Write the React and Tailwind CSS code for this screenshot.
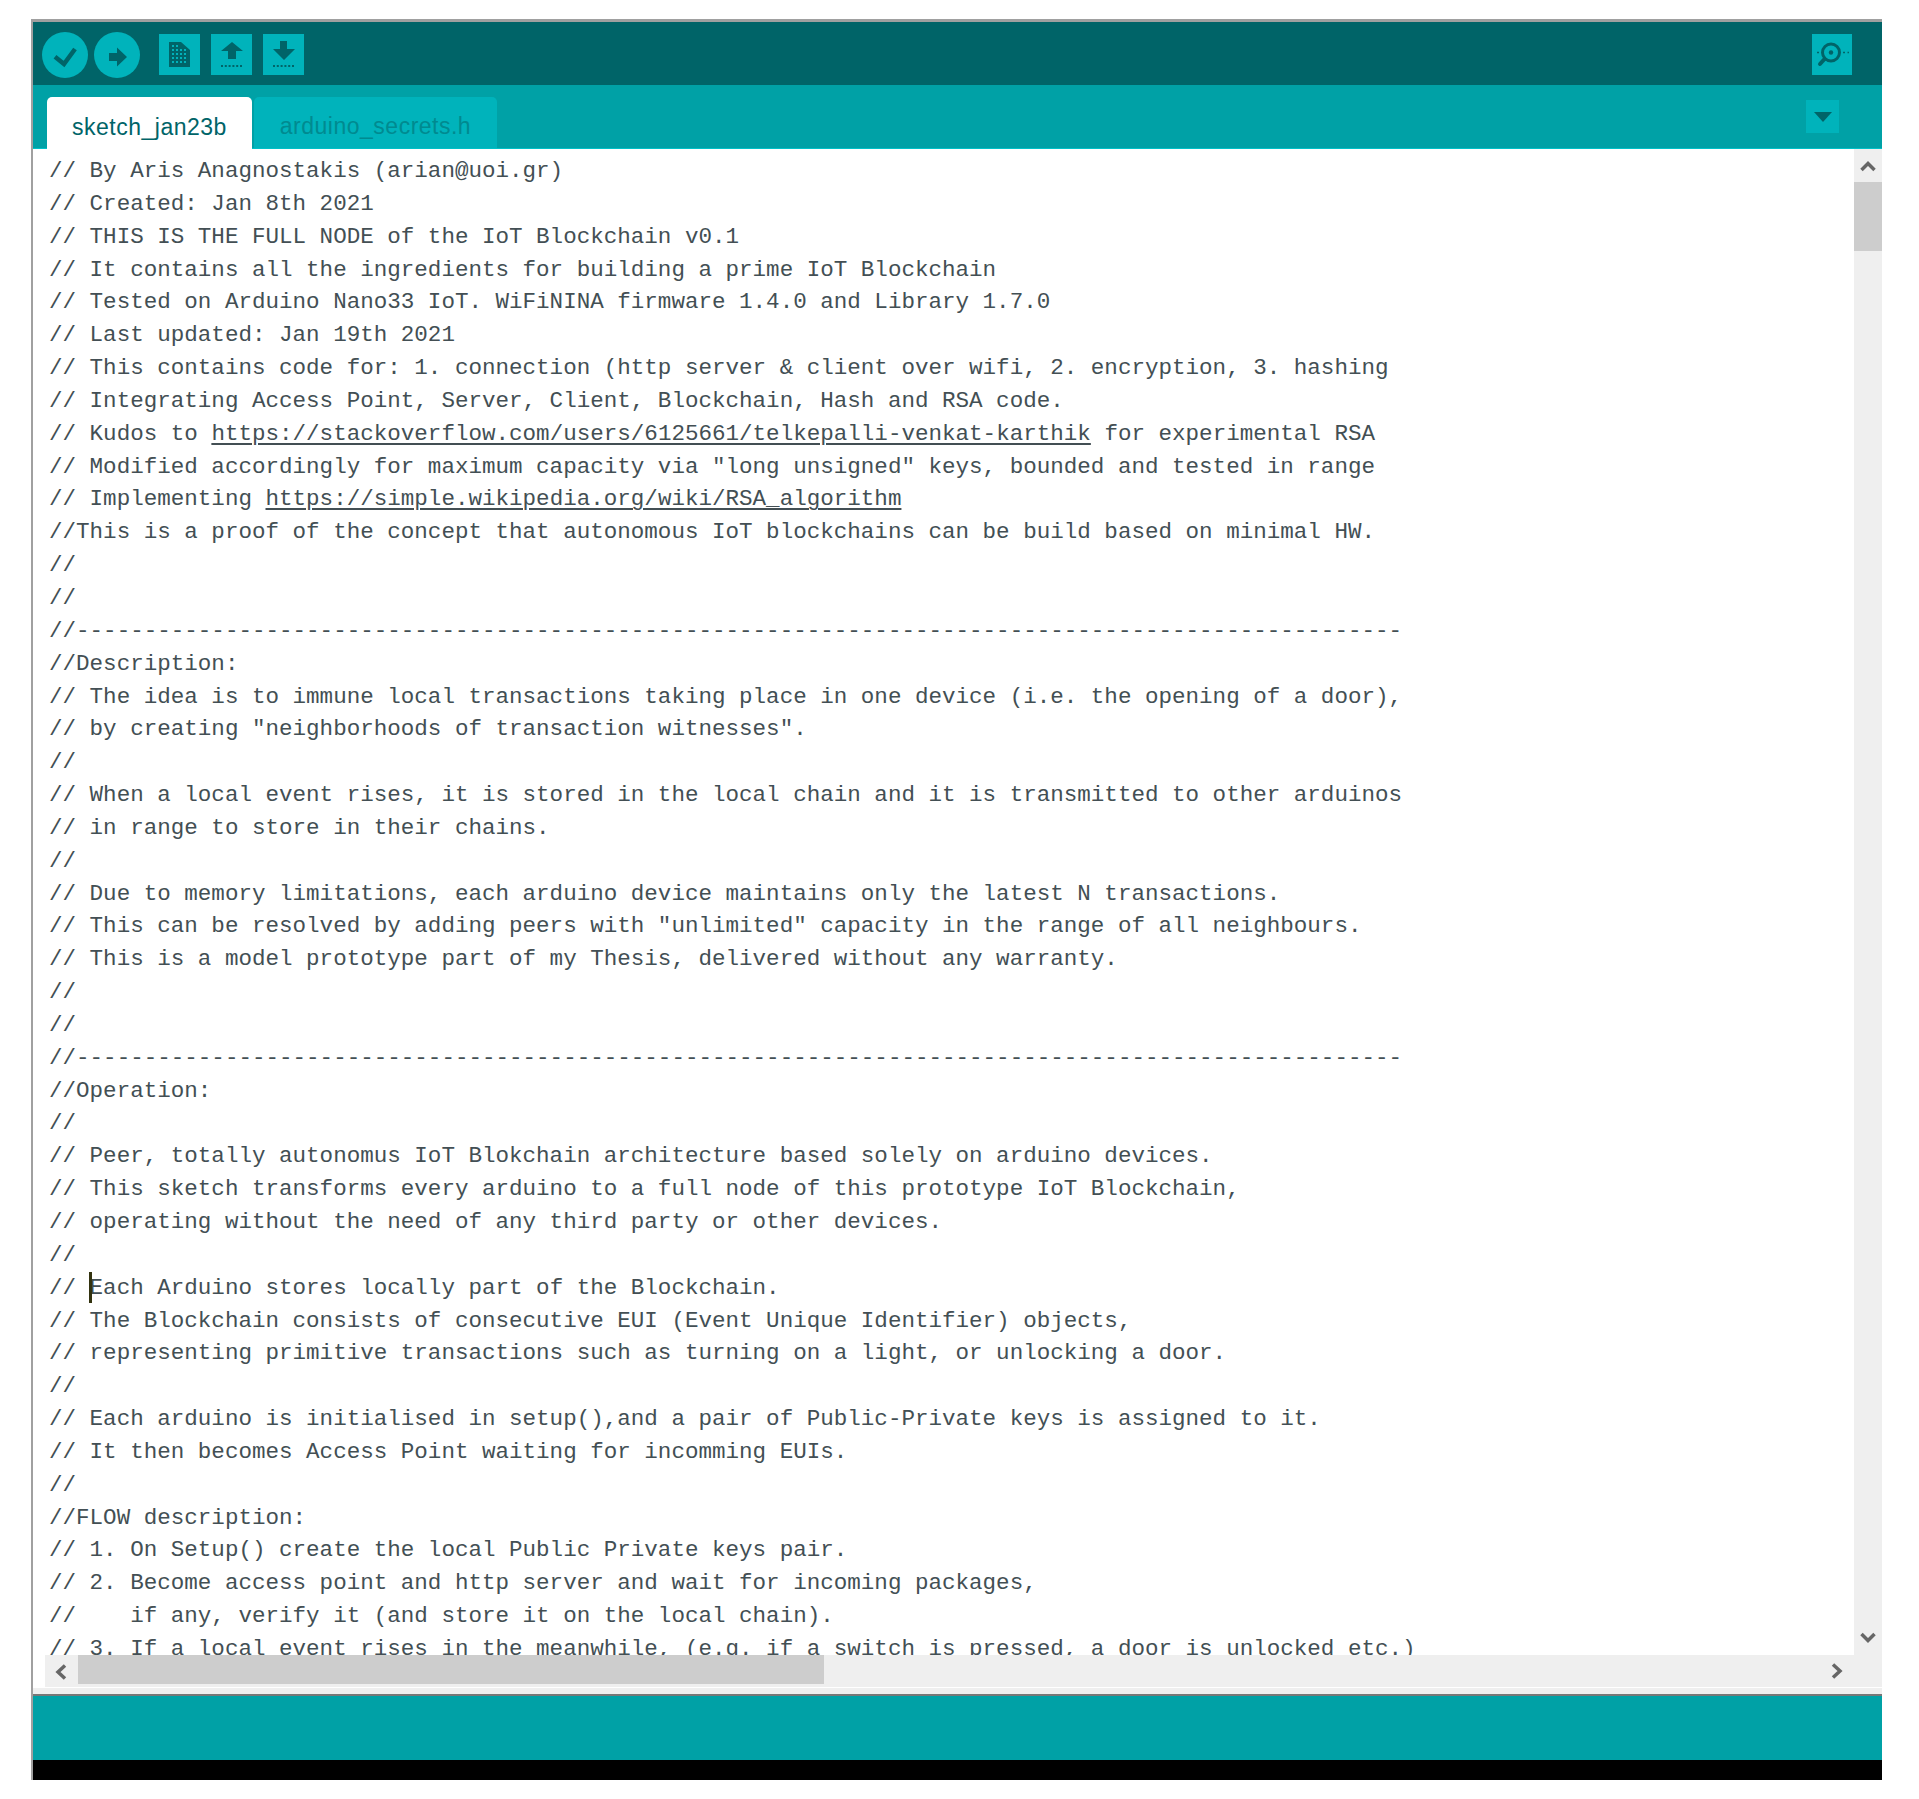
const lines = [
  "// By Aris Anagnostakis (arian@uoi.gr)",
  "// Created: Jan 8th 2021",
  "// THIS IS THE FULL NODE of the IoT Blockchain v0.1",
  "// It contains all the ingredients for building a prime IoT Blockchain",
  "// Tested on Arduino Nano33 IoT. WiFiNINA firmware 1.4.0 and Library 1.7.0",
  "// Last updated: Jan 19th 2021",
  "// This contains code for: 1. connection (http server & client over wifi, 2. encryption, 3. hashing",
  "// Integrating Access Point, Server, Client, Blockchain, Hash and RSA code.",
  ["// Kudos to ", "https://stackoverflow.com/users/6125661/telkepalli-venkat-karthik", " for experimental RSA"],
  "// Modified accordingly for maximum capacity via \"long unsigned\" keys, bounded and tested in range",
  ["// Implementing ", "https://simple.wikipedia.org/wiki/RSA_algorithm", ""],
  "//This is a proof of the concept that autonomous IoT blockchains can be build based on minimal HW.",
  "//",
  "//",
  "//" + "-".repeat(98),
  "//Description:",
  "// The idea is to immune local transactions taking place in one device (i.e. the opening of a door),",
  "// by creating \"neighborhoods of transaction witnesses\".",
  "//",
  "// When a local event rises, it is stored in the local chain and it is transmitted to other arduinos",
  "// in range to store in their chains.",
  "//",
  "// Due to memory limitations, each arduino device maintains only the latest N transactions.",
  "// This can be resolved by adding peers with \"unlimited\" capacity in the range of all neighbours.",
  "// This is a model prototype part of my Thesis, delivered without any warranty.",
  "//",
  "//",
  "//" + "-".repeat(98),
  "//Operation:",
  "//",
  "// Peer, totally autonomus IoT Blokchain architecture based solely on arduino devices.",
  "// This sketch transforms every arduino to a full node of this prototype IoT Blockchain,",
  "// operating without the need of any third party or other devices.",
  "//",
  "CARET",
  "// The Blockchain consists of consecutive EUI (Event Unique Identifier) objects,",
  "// representing primitive transactions such as turning on a light, or unlocking a door.",
  "//",
  "// Each arduino is initialised in setup(),and a pair of Public-Private keys is assigned to it.",
  "// It then becomes Access Point waiting for incomming EUIs.",
  "//",
  "//FLOW description:",
  "// 1. On Setup() create the local Public Private keys pair.",
  "// 2. Become access point and http server and wait for incoming packages,",
  "//    if any, verify it (and store it on the local chain).",
  "// 3. If a local event rises in the meanwhile, (e.g. if a switch is pressed, a door is unlocked etc.)",
];

function Line({ l }) {
  if (l === "CARET") {
    return (
      <div className="h-[32.85px] whitespace-pre">
        {"// "}
        <span className="relative">
          <span className="absolute left-[-1px] top-[-3px] h-[31px] w-[3px] bg-[#33330f]" />
          Each Arduino stores locally part of the Blockchain.
        </span>
      </div>
    );
  }
  if (Array.isArray(l)) {
    return (
      <div className="h-[32.85px] whitespace-pre">
        {l[0]}
        <span className="underline underline-offset-[3px] decoration-[2px]">{l[1]}</span>
        {l[2]}
      </div>
    );
  }
  return <div className="h-[32.85px] whitespace-pre">{l}</div>;
}

function RoundBtn({ children }) {
  return (
    <div className="w-[46px] h-[46px] rounded-full bg-[#00b3bb] flex items-center justify-center">
      <svg width="46" height="46" viewBox="0 0 46 46">{children}</svg>
    </div>
  );
}

function SquareBtn({ children }) {
  return (
    <div className="w-[41px] h-[41px] bg-[#00b3bb]">
      <svg width="41" height="41" viewBox="0 0 41 41">{children}</svg>
    </div>
  );
}

const DotRow = () => (
  <path d="M10 32h22" stroke="#006468" strokeWidth="2" strokeDasharray="2 1.8" fill="none" />
);

export default function App() {
  return (
    <div className="w-[1919px] h-[1799px] bg-white pl-[31px] pt-[19px] font-['Liberation_Mono',monospace]">
      <div className="w-[1851px] h-[1761px] border-t-[3px] border-l-[2px] border-[#a0a0a0] flex flex-col overflow-hidden">
        <div className="h-[63px] shrink-0 bg-[#006468] flex items-center pt-[2px] pl-[9px] pr-[30px]">
          <div className="flex gap-[6px]">
            <RoundBtn>
              <path d="M13 24.7l9 7.3 11-15" fill="none" stroke="#006468" strokeWidth="4.5" />
            </RoundBtn>
            <RoundBtn>
              <path d="M15 21h8v-5.5L33 25 23 34.5V29h-8z" fill="#006468" />
            </RoundBtn>
          </div>
          <div className="flex gap-[11px] ml-[19px]">
            <SquareBtn>
              <path d="M10 8h12l9 8v17H10z" fill="#006468" />
              <path d="M13 12h8M13 16h15M13 20h15M13 24h15M13 28h15" stroke="#00b3bb" strokeWidth="2" strokeDasharray="2 2" fill="none" />
            </SquareBtn>
            <SquareBtn>
              <path d="M21 8l11 9h-7v8h-8v-8h-7z" fill="#006468" />
              <DotRow />
            </SquareBtn>
            <SquareBtn>
              <path d="M17 7h7v8h8L21 26 10 15h7z" fill="#006468" />
              <DotRow />
            </SquareBtn>
          </div>
          <div className="ml-auto w-[40px] h-[41px] bg-[#00b3bb]">
            <svg width="40" height="41" viewBox="0 0 40 41">
              <circle cx="19" cy="18.5" r="8.5" fill="none" stroke="#006468" strokeWidth="3" />
              <circle cx="19" cy="18.5" r="2.2" fill="#006468" />
              <path d="M12.5 25l-4.5 5" stroke="#006468" strokeWidth="4" strokeLinecap="round" />
              <path d="M5 18.5h2M31 18.5h6" stroke="#006468" strokeWidth="1.5" strokeDasharray="2 2.5" />
            </svg>
          </div>
        </div>

        <div className="h-[64px] shrink-0 bg-[#00a1a6] border-b border-[#00c0c8] flex items-end pl-[14px] relative">
          <div className="w-[205px] h-[52px] -mb-px bg-white rounded-t-[5px] flex items-center justify-center pt-[8px] text-[#006468] text-[23px] tracking-[0.5px] font-['Liberation_Sans',sans-serif]">
            sketch_jan23b
          </div>
          <div className="w-[243px] h-[51px] ml-[2px] bg-[#00b3bb] rounded-t-[5px] flex items-center justify-center pt-[7px] text-[#008a90] text-[23px] tracking-[0.5px] font-['Liberation_Sans',sans-serif]">
            arduino_secrets.h
          </div>
          <div className="absolute right-[43px] top-[15px] w-[33px] h-[33px] bg-[#00b3bb] flex items-center justify-center">
            <svg width="18" height="10" viewBox="0 0 18 10"><path d="M0 0h18L9 10z" fill="#006468" /></svg>
          </div>
        </div>

        <div className="flex h-[1538px] shrink-0 bg-[#efefef]">
          <div className="flex flex-col flex-1 min-w-0">
            <div className="h-[1506px] shrink-0 overflow-hidden bg-white pl-[16px] pt-[6px] text-[22.55px] leading-[32.85px] text-[#434f54]">
              {lines.map((l, i) => (
                <Line key={i} l={l} />
              ))}
            </div>
            <div className="h-[32px] shrink-0 bg-white pl-[12px]">
              <div className="h-full flex items-start bg-[#efefef] pl-[9px]">
                <svg width="14" height="16" viewBox="0 0 14 16" className="shrink-0 mt-[9px]"><path d="M11 1.5L4 8l7 6.5" fill="none" stroke="#666" strokeWidth="3.5" /></svg>
                <div className="ml-[10px] w-[746px] h-[29px] bg-[#cdcdcd]" />
                <svg width="14" height="16" viewBox="0 0 14 16" className="ml-auto mr-[10px] mt-[8px] shrink-0"><path d="M3 1.5L10 8l-7 6.5" fill="none" stroke="#666" strokeWidth="3.5" /></svg>
              </div>
            </div>
          </div>
          <div className="w-[28px] shrink-0 flex flex-col items-center bg-[#efefef]">
            <svg width="16" height="12" viewBox="0 0 16 12" className="mt-[11px]"><path d="M1.5 10L8 3.5l6.5 6.5" fill="none" stroke="#666" strokeWidth="3.5" /></svg>
            <div className="mt-[10px] w-full h-[69px] bg-[#cdcdcd]" />
            <svg width="16" height="12" viewBox="0 0 16 12" className="mt-auto mb-[43px]"><path d="M1.5 2L8 8.5 14.5 2" fill="none" stroke="#666" strokeWidth="3.5" /></svg>
          </div>
        </div>

        <div className="h-[7px] shrink-0 bg-[#efefef] border-t border-white" />
        <div className="h-[2px] shrink-0 bg-[#777]" />
        <div className="h-[64px] shrink-0 bg-[#00a1a6]" />
        <div className="h-[20px] shrink-0 bg-black" />
      </div>
    </div>
  );
}
